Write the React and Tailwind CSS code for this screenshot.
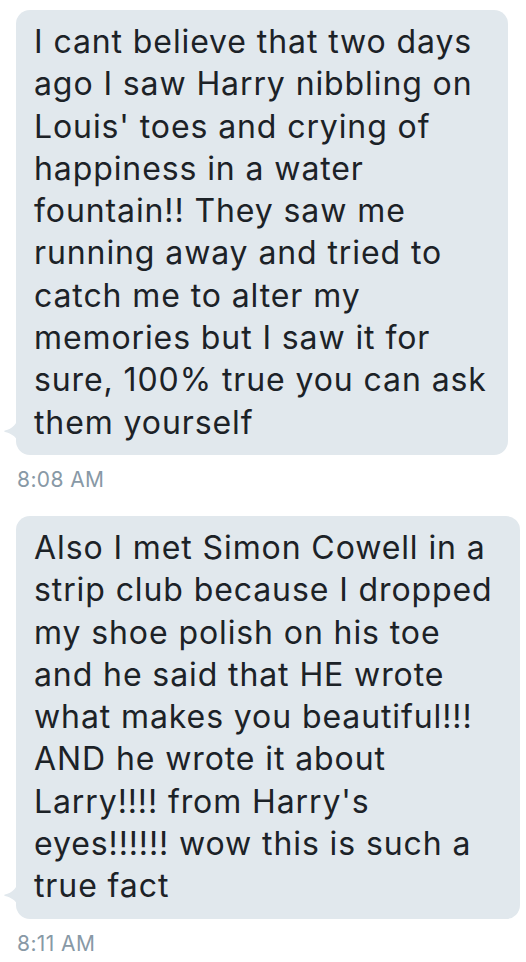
import React from 'react';

const messages = [
  {
    time: '8:08 AM',
    width: 'w-[492px]',
    lines: [
      'I cant believe that two days',
      'ago I saw Harry nibbling on',
      "Louis' toes and crying of",
      'happiness in a water',
      'fountain!! They saw me',
      'running away and tried to',
      'catch me to alter my',
      'memories but I saw it for',
      'sure, 100% true you can ask',
      'them yourself',
    ],
  },
  {
    time: '8:11 AM',
    width: 'w-[504px]',
    lines: [
      'Also I met Simon Cowell in a',
      'strip club because I dropped',
      'my shoe polish on his toe',
      'and he said that HE wrote',
      'what makes you beautiful!!!',
      'AND he wrote it about',
      "Larry!!!! from Harry's",
      'eyes!!!!!! wow this is such a',
      'true fact',
    ],
  },
];

const Tail = () => (
  <svg
    className="absolute -left-[12px] bottom-[14px]"
    width="14"
    height="26"
    viewBox="0 0 14 26"
    aria-hidden="true"
  >
    <path d="M14 0 C14 9 8 14 1 15.5 C0 15.8 0 16.6 1 17 C7 18.5 11 21 14 26 Z" fill="#e1e8ed" />
  </svg>
);

const Bubble = ({ lines, time, width }) => (
  <div className="flex flex-col items-start">
    <div
      className={`relative ${width} bg-[#e1e8ed] rounded-[14px] pt-[11px] pb-[11px] pl-[18px] pr-2 text-[32px] leading-[42.3px] tracking-[0.9px] text-[#1c2227]`}
    >
      {lines.map((l, i) => (
        <div key={i} className="whitespace-nowrap">{l}</div>
      ))}
      <Tail />
    </div>
    <span className="mt-[13px] pl-px text-[21px] leading-6 tracking-[0.4px] text-[#8899a6]">{time}</span>
  </div>
);

export default function App() {
  return (
    <div
      className="w-[526px] h-[962px] bg-white pt-[10px] pl-4 flex flex-col gap-6 overflow-hidden"
      style={{ fontFamily: 'Inter, "Noto Sans", sans-serif' }}
    >
      {messages.map((m) => (
        <Bubble key={m.time} {...m} />
      ))}
    </div>
  );
}
